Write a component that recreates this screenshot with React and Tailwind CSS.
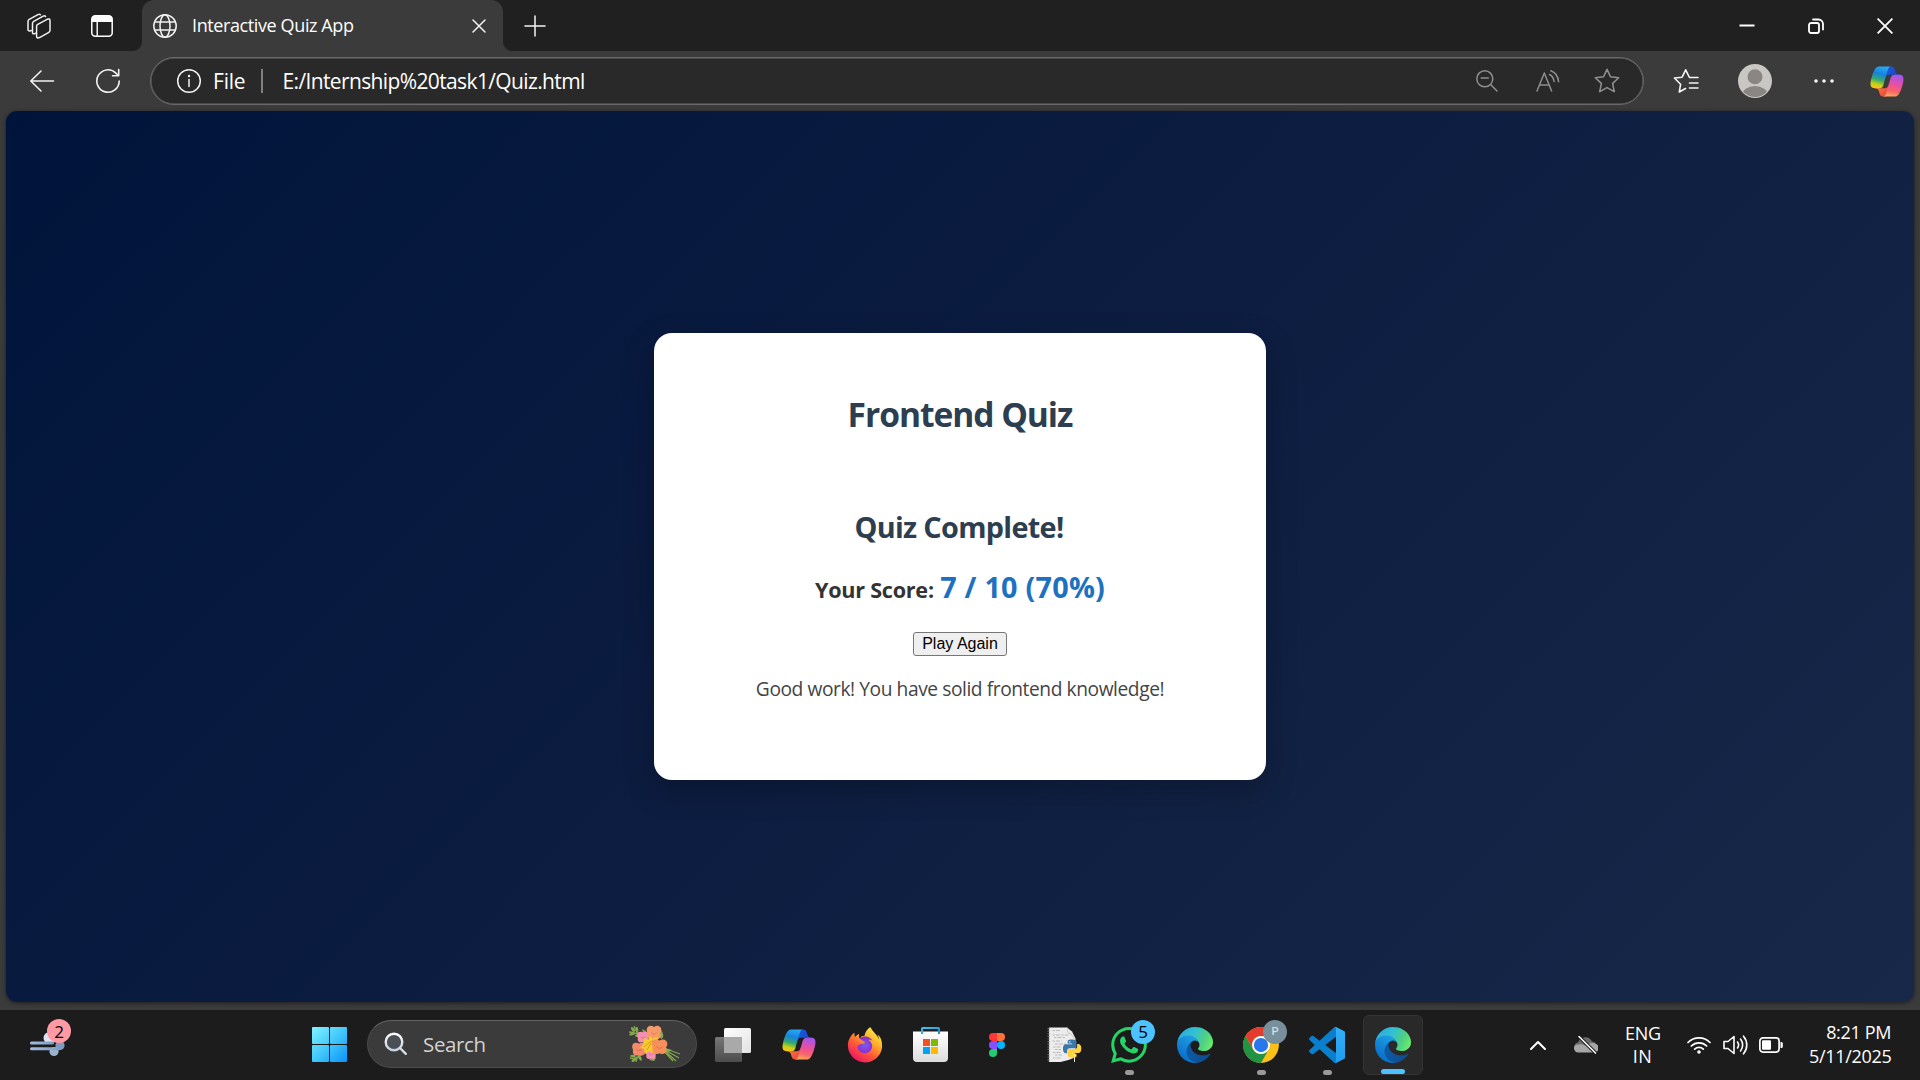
import React from "react";
import { SiWhatsapp } from "react-icons/si";
import { FaFirefoxBrowser } from "react-icons/fa";

/* ---------- shared gradients ---------- */

function Gradients() {
  return (
    <svg width="0" height="0" className="absolute" aria-hidden="true">
      <defs>
        <linearGradient id="cpBlue" x1="0.6" y1="0" x2="0.35" y2="1">
          <stop offset="0" stopColor="#2aa9f3" />
          <stop offset="0.35" stopColor="#1583dd" />
          <stop offset="0.62" stopColor="#35a872" />
          <stop offset="0.85" stopColor="#c9d312" />
          <stop offset="1" stopColor="#f6c21c" />
        </linearGradient>
        <linearGradient id="cpNavy" x1="0" y1="0" x2="1" y2="0.4">
          <stop offset="0" stopColor="#1b5bdb" />
          <stop offset="1" stopColor="#1a47cf" />
        </linearGradient>
        <linearGradient id="cpPink" x1="0.6" y1="0" x2="0.4" y2="1">
          <stop offset="0" stopColor="#a356ee" />
          <stop offset="0.45" stopColor="#ea4f9e" />
          <stop offset="0.75" stopColor="#f7646a" />
          <stop offset="1" stopColor="#fda75c" />
        </linearGradient>
        <linearGradient id="cpRed" x1="0" y1="0" x2="1" y2="1">
          <stop offset="0" stopColor="#fb8a3c" />
          <stop offset="1" stopColor="#e93b3f" />
        </linearGradient>
        <linearGradient id="egNavy" x1="0.2" y1="0.4" x2="1" y2="0.6">
          <stop offset="0" stopColor="#0c59a4" />
          <stop offset="1" stopColor="#114a8b" />
        </linearGradient>
        <linearGradient id="egBlue" x1="0.7" y1="0.2" x2="0.2" y2="1">
          <stop offset="0" stopColor="#1b9de2" />
          <stop offset="0.5" stopColor="#1480d4" />
          <stop offset="1" stopColor="#0067c0" />
        </linearGradient>
        <linearGradient id="egGreen" x1="0" y1="0.3" x2="1" y2="0.6">
          <stop offset="0" stopColor="#2ba9e2" />
          <stop offset="0.45" stopColor="#33c1d0" />
          <stop offset="0.75" stopColor="#4fcf84" />
          <stop offset="1" stopColor="#66eb6e" />
        </linearGradient>
        <linearGradient id="ffFlame" x1="0.85" y1="0.05" x2="0.25" y2="0.95">
          <stop offset="0" stopColor="#fff04a" />
          <stop offset="0.35" stopColor="#ffb02b" />
          <stop offset="0.65" stopColor="#ff5a36" />
          <stop offset="1" stopColor="#ef1765" />
        </linearGradient>
        <radialGradient id="ffGlobe">
          <stop offset="0" stopColor="#7a5cf0" />
          <stop offset="1" stopColor="#8a2bd0" />
        </radialGradient>
        <linearGradient id="winTile" gradientUnits="userSpaceOnUse" x1="0" y1="0" x2="35" y2="35">
          <stop offset="0" stopColor="#80f4ff" />
          <stop offset="0.5" stopColor="#43c8fb" />
          <stop offset="1" stopColor="#0a93f8" />
        </linearGradient>
        <linearGradient id="storeBag" x1="0" y1="0" x2="0" y2="1">
          <stop offset="0" stopColor="#ffffff" />
          <stop offset="1" stopColor="#dcdcdc" />
        </linearGradient>
        <linearGradient id="storeGrip" x1="0" y1="0" x2="1" y2="1">
          <stop offset="0" stopColor="#35c7f2" />
          <stop offset="1" stopColor="#1487cf" />
        </linearGradient>
        <linearGradient id="tvBack" x1="0" y1="0" x2="0" y2="1">
          <stop offset="0" stopColor="#777777" />
          <stop offset="1" stopColor="#4c4c4c" />
        </linearGradient>
        <linearGradient id="tvFront" x1="0" y1="0" x2="1" y2="1">
          <stop offset="0" stopColor="#ffffff" />
          <stop offset="1" stopColor="#e2e2e2" />
        </linearGradient>
        <linearGradient id="windBlue" x1="0" y1="0" x2="1" y2="0">
          <stop offset="0" stopColor="#a3bde0" />
          <stop offset="1" stopColor="#7f9dc4" />
        </linearGradient>
        <linearGradient id="vsSlab" x1="0" y1="0" x2="0" y2="1">
          <stop offset="0" stopColor="#34aef5" />
          <stop offset="1" stopColor="#1f9cf0" />
        </linearGradient>
        <linearGradient id="searchRing" x1="0" y1="0" x2="0" y2="1">
          <stop offset="0" stopColor="#ffffff" />
          <stop offset="1" stopColor="#c6cfdb" />
        </linearGradient>
      </defs>
    </svg>
  );
}

/* ---------- app logos ---------- */

function CopilotLogo({ className }) {
  return (
    <svg viewBox="0 2 48 44" className={className}>
      <path fill="url(#cpNavy)" d="M34.142 7.325A4.63 4.63 0 0 0 29.7 4h-1.35a4.63 4.63 0 0 0-4.554 3.794L21.48 20.407l.575-1.965a4.63 4.63 0 0 1 4.444-3.33h7.853l3.294 1.282 3.175-1.283h-.926a4.63 4.63 0 0 1-4.443-3.325l-1.31-4.461Z" />
      <path fill="url(#cpRed)" d="M14.33 40.656A4.63 4.63 0 0 0 18.779 44h2.87a4.63 4.63 0 0 0 4.629-4.51l.312-12.163-.654 2.233a4.63 4.63 0 0 1-4.443 3.329h-7.919l-2.823-1.532-3.057 1.532h.912a4.63 4.63 0 0 1 4.447 3.344l1.279 4.423Z" />
      <path fill="url(#cpBlue)" d="M29.5 4H13.46c-4.583 0-7.332 6.057-9.165 12.113-2.172 7.176-5.014 16.772 3.208 16.772h6.925a4.67 4.67 0 0 0 4.455-3.358 2078.617 2078.617 0 0 1 4.971-17.156c.842-2.853 1.544-5.303 2.621-6.83C27.079 4.643 28.086 4 29.5 4Z" />
      <path fill="url(#cpPink)" d="M18.498 44h16.04c4.582 0 7.332-6.058 9.165-12.115 2.171-7.177 5.013-16.775-3.208-16.775h-6.926a4.67 4.67 0 0 0-4.454 3.358 2084.036 2084.036 0 0 1-4.972 17.16c-.842 2.853-1.544 5.303-2.621 6.83-.604.855-1.61 1.542-3.024 1.542Z" />
    </svg>
  );
}

function EdgeLogo() {
  return (
    <svg viewBox="0 0 256 256" className="size-9">
      <g transform="translate(-4.63 -4.92)">
        <path fill="url(#egNavy)" d="M235.68,195.46a93.73,93.73,0,0,1-10.54,4.71,101.87,101.87,0,0,1-35.9,6.46c-47.32,0-88.54-32.55-88.54-74.32A31.48,31.48,0,0,1,117.13,105c-42.8,1.8-53.8,46.4-53.8,72.53,0,73.88,68.09,81.37,82.76,81.37,7.91,0,19.84-2.3,27-4.56l1.31-.44A128.34,128.34,0,0,0,241,201.1a4,4,0,0,0-5.32-5.64Z" />
        <path fill="url(#egBlue)" d="M110.34,246.34A79.2,79.2,0,0,1,87.6,225,80.72,80.72,0,0,1,117.13,105c3.12-1.47,8.45-4.13,15.54-4a32.35,32.35,0,0,1,25.69,13,31.88,31.88,0,0,1,6.36,18.66c0-.21,24.46-79.6-80-79.6-43.9,0-80,41.66-80,78.21a130.15,130.15,0,0,0,12.11,56,128,128,0,0,0,156.38,67.11,75.55,75.55,0,0,1-62.78-8Z" />
        <path fill="url(#egGreen)" d="M156.94,153.78c-.81,1.05-3.3,2.5-3.3,5.66,0,2.61,1.7,5.12,4.72,7.23,14.38,10,41.49,8.68,41.56,8.68a59.56,59.56,0,0,0,30.27-8.35A61.38,61.38,0,0,0,260.63,114c.26-22.41-8-37.31-11.34-43.91C228.09,28.76,182.35,5,132.62,5a128,128,0,0,0-128,126.2c.48-36.54,36.8-66.05,80-66.05,3.5,0,23.46.34,42,10.07,16.34,8.58,24.9,18.94,30.85,29.21,6.18,10.67,7.28,24.15,7.28,29.52S162,147.2,156.94,153.78Z" />
      </g>
    </svg>
  );
}

function WindowsLogo() {
  return (
    <svg viewBox="0 0 35 35" className="mr-[2px] size-[35px]">
      <g fill="url(#winTile)">
        <rect x="0" y="0" width="17" height="17" rx="1" />
        <rect x="18" y="0" width="17" height="17" rx="1" />
        <rect x="0" y="18" width="17" height="17" rx="1" />
        <rect x="18" y="18" width="17" height="17" rx="1" />
      </g>
    </svg>
  );
}

function TaskViewLogo() {
  return (
    <svg viewBox="0 0 36 34" className="h-[34px] w-9">
      <rect x="0" y="9" width="27" height="25" rx="1.5" fill="url(#tvBack)" />
      <rect x="9" y="0" width="27" height="25" rx="1.5" fill="url(#tvFront)" />
      <rect x="9" y="9" width="18" height="16" fill="#a9a9a9" />
    </svg>
  );
}

function FirefoxLogo() {
  return (
    <span className="relative flex">
      <svg viewBox="0 0 36 36" className="absolute inset-0 size-9">
        <circle cx="18" cy="18" r="9" fill="url(#ffGlobe)" />
      </svg>
      <FaFirefoxBrowser className="relative size-9" fill="url(#ffFlame)" />
    </span>
  );
}

function StoreLogo() {
  return (
    <svg viewBox="0 0 35 35" className="mr-px size-[35px]">
      <path d="M0 4.5h35V31a4 4 0 0 1-4 4H4a4 4 0 0 1-4-4Z" fill="url(#storeBag)" />
      <path d="M9 7V1.8q0-.8.8-.8h15.4q.8 0 .8.8V7" fill="none" stroke="url(#storeGrip)" strokeWidth="2" />
      <rect x="10" y="12" width="7" height="7" fill="#f25022" />
      <rect x="18" y="12" width="7" height="7" fill="#7fba00" />
      <rect x="10" y="20" width="7" height="7" fill="#00a4ef" />
      <rect x="18" y="20" width="7" height="7" fill="#ffb900" />
    </svg>
  );
}

function FigmaLogo() {
  return (
    <svg viewBox="0 0 16 24" className="h-6 w-4">
      <path d="M4 0h4v8H4a4 4 0 0 1 0-8Z" fill="#ff3737" />
      <path d="M8 0h4a4 4 0 0 1 0 8H8Z" fill="#ff7237" />
      <path d="M4 8h4v8H4a4 4 0 0 1 0-8Z" fill="#874fff" />
      <circle cx="12" cy="12" r="4" fill="#00b6ff" />
      <path d="M4 16h4v4a4 4 0 1 1-4-4Z" fill="#24cb71" />
    </svg>
  );
}

const PYTHON_HALF =
  "M14.25.18l.9.2.73.26.59.3.45.32.34.34.25.34.16.33.1.3.04.26.02.2-.01.13V8.5l-.05.63-.13.55-.21.46-.26.38-.3.31-.33.25-.35.19-.35.14-.33.1-.3.07-.26.04-.21.02H8.77l-.69.05-.59.14-.5.22-.41.27-.33.32-.27.35-.2.36-.15.37-.1.35-.07.32-.04.27-.02.21v3.06H3.17l-.21-.03-.28-.07-.32-.12-.35-.18-.36-.26-.36-.36-.35-.46-.32-.59-.28-.73-.21-.88-.14-1.05-.05-1.23.06-1.22.16-1.04.24-.87.32-.71.36-.57.4-.44.42-.33.42-.24.4-.16.36-.1.32-.05.24-.01h.16l.06.01h8.16v-.83H6.18l-.01-2.75-.02-.37.05-.34.11-.31.17-.28.25-.26.31-.23.38-.2.44-.18.51-.15.58-.12.64-.1.71-.06.77-.04.84-.02 1.27.05z";

function PythonFileLogo() {
  return (
    <svg viewBox="0 0 36 36" className="ml-[3px] size-9">
      <path d="M2 .5h18l5 4 3.500 7V24l-2 7-5 2-8 2H2Z" fill="#ececec" />
      <path d="M20 .5l1 5.500 3 1 3.500 5" fill="none" stroke="#c9c9c9" strokeWidth="1" />
      <path d="M1.500 1v34" stroke="#6a6a6a" strokeWidth="2" strokeDasharray="1.200 1.400" />
      <g stroke="#b4b4b4" strokeWidth="0.900" strokeDasharray="2.500 1 4 1.200">
        <path d="M5.500 3.500h8M5.500 8h16M7 10.500h11M5.500 14h9M8 17h11M6 20h8M8 22.500h6M6 25.500h8M8 28h7M6 31h8" />
      </g>
      <path d="M27.500 30v5" stroke="#e8e8e8" strokeWidth="1" />
      <g transform="translate(16 12.500) scale(0.760)">
        <path d={PYTHON_HALF} fill="#3b77a8" />
        <path d={PYTHON_HALF} fill="#ffd13e" transform="rotate(180 12 12)" />
        <circle cx="8.900" cy="3" r="1" fill="#e8eef4" />
        <circle cx="15.100" cy="21" r="1" fill="#ffffff" />
      </g>
    </svg>
  );
}

function ChromeLogo() {
  return (
    <svg viewBox="0 0 48 48" className="size-9">
      <circle cx="24" cy="24" r="23.900" fill="#fbc116" />
      <path d="M3.300 12A23.900 23.900 0 0 1 44.700 12H24A12 12 0 0 0 13.600 18L13.600 30Z" fill="#e33b2e" />
      <path d="M3.300 12A23.900 23.900 0 0 0 24 47.900L34.400 30A12 12 0 0 1 13.600 30Z" fill="#229342" />
      <circle cx="24" cy="24" r="12" fill="#fff" />
      <circle cx="24" cy="24" r="9.500" fill="#2878ec" />
    </svg>
  );
}

function VSCodeLogo() {
  return (
    <svg viewBox="0 0 100 100" className="size-9">
      <path fillRule="evenodd" fill="#0a7fcd" d="M70.912 99.317C72.487 99.931 74.283 99.891 75.873 99.126L96.461 89.22C98.624 88.179 100 85.989 100 83.587V16.413C100 14.011 98.624 11.822 96.461 10.781L75.873.874C73.786-.13 71.345.116 69.514 1.447 69.252 1.637 69.003 1.849 68.769 2.083L29.355 38.042 12.187 25.01C10.589 23.797 8.354 23.896 6.869 25.246L1.363 30.255C-.453 31.906-.455 34.763 1.359 36.417L16.247 50 1.359 63.583C-.455 65.237-.453 68.094 1.363 69.745L6.869 74.754C8.354 76.104 10.589 76.204 12.187 74.991L29.355 61.959 68.769 97.917C69.393 98.541 70.125 99.01 70.912 99.317ZM75.015 27.299 45.109 50 75.015 72.701V27.299Z" />
      <path fill="url(#vsSlab)" d="M75.015 4.500V95.500L70.900 99.300C72.500 99.930 74.300 99.890 75.900 99.130L96.460 89.220C98.620 88.180 100 85.990 100 83.590V16.410C100 14.010 98.620 11.820 96.460 10.780L75.870.870C73.790-.130 71.340.110 69.500 1.450 72.500-.200 75.015 1.800 75.015 4.500Z" />
    </svg>
  );
}

function WeatherWindLogo() {
  return (
    <svg viewBox="0 0 36 26" className="h-[26px] w-9">
      <circle cx="19.500" cy="7" r="6" fill="#dbe4f0" />
      <rect x="0" y="10.500" width="24" height="3" rx="1.500" fill="url(#windBlue)" />
      <circle cx="30" cy="14.500" r="4.600" fill="#7f9cbd" />
      <circle cx="24" cy="20.500" r="4.600" fill="#9cb3cf" />
      <rect x="0" y="16.300" width="31" height="3" rx="1.500" fill="url(#windBlue)" />
    </svg>
  );
}

function Bouquet() {
  const blossom = (cx, cy, r, fill, core) => (
    <g key={`${cx}-${cy}`}>
      <circle cx={cx} cy={cy} r={r * 0.8} fill={fill} />
      <circle cx={cx - r * 0.45} cy={cy - r * 0.35} r={r * 0.6} fill={fill} />
      <circle cx={cx + r * 0.45} cy={cy - r * 0.35} r={r * 0.6} fill={fill} />
      <circle cx={cx - r * 0.35} cy={cy + r * 0.4} r={r * 0.6} fill={fill} />
      <circle cx={cx + r * 0.35} cy={cy + r * 0.4} r={r * 0.6} fill={fill} />
      <path d={`M${cx - r * 0.4} ${cy}q${r * 0.4} ${r * 0.5} ${r * 0.8} 0`} fill="none" stroke={core} strokeWidth="0.8" />
    </g>
  );
  return (
    <svg viewBox="0 0 54 38" className="h-[38px] w-[54px]">
      <g stroke="#7fa64a" strokeWidth="1.300" fill="none">
        <path d="M38 24l14 5M37 25l14 8M36 25l12 11M36 26l9 10" />
        <path d="M1 7q8 0 16 7M6 1q2 6 6 10M2 33q8 2 16-8M8 37q1-6 6-10" />
      </g>
      <g fill="#86a94e">
        <ellipse cx="5" cy="4.500" rx="2.800" ry="1.400" transform="rotate(50 5 4.500)" />
        <ellipse cx="9" cy="4.500" rx="2.800" ry="1.300" transform="rotate(80 9 4.500)" />
        <ellipse cx="4" cy="9" rx="3" ry="1.300" transform="rotate(-15 4 9)" />
        <ellipse cx="10" cy="11" rx="3" ry="1.400" transform="rotate(10 10 11)" />
        <ellipse cx="5" cy="31" rx="2.800" ry="1.300" />
        <ellipse cx="6" cy="35" rx="2.800" ry="1.300" transform="rotate(-30 6 35)" />
        <ellipse cx="12" cy="33" rx="3" ry="1.400" transform="rotate(60 12 33)" />
        <path d="M14 4q7 2 7 10q-6-3-7-10ZM33 5q4 5 1 9l-5-3ZM21 35q3-3 7-2l-2 3ZM37 23l7 2-5 3Z" />
      </g>
      {blossom(15, 12, 5.5, "#f58fb0", "#d9668c")}
      {blossom(23, 29, 5, "#f58fb0", "#e0709a")}
      {blossom(26, 7.5, 7, "#f79a6b", "#e2703f")}
      {blossom(11, 24, 6.5, "#f58a6a", "#db6244")}
      <path d="M16 13l4 2 2-4 3 3 4-3 1 5 3 1-3 3 2 4-5 0-2 4-4-2-4 3-1-5-4-1 3-4Z" fill="#f7c930" />
      <path d="M16 22l6-5 5-2M19 25l4-7" stroke="#dc9d18" strokeWidth="1" fill="none" />
      {blossom(31.5, 21.5, 7.5, "#f78f5c", "#dd6535")}
    </svg>
  );
}

/* ---------- browser chrome ---------- */

function WorkspacesIcon() {
  return (
    <svg viewBox="0 0 26 26" className="size-[26px]" fill="none" stroke="#f2f2f2" strokeWidth="1.500" strokeLinejoin="round" strokeLinecap="round">
      <path d="M11 12.500q0-1.300 1.200-2l9.500-5.300q3-1.200 3 1.300v10q0 1.300-1.200 2l-9.500 5.300q-3 1.200-3-1.300Z" transform="translate(-.2 1.200) scale(.98)" />
      <path d="M9.500 20.200l-1.200.6q-1.800.4-1.800-1.400v-9q0-1.400 1.200-2.100l9.500-5.200q1.600-.7 2.300.4" />
      <path d="M5.300 17.500l-1 .4q-2.300.4-2.300-1.500V8.500q0-1.400 1.200-2.100L12 1.600q1.600-.7 2.400.2" />
    </svg>
  );
}

function TabActionsIcon() {
  return (
    <svg viewBox="0 0 22 22" className="size-[22px]">
      <rect x="0.800" y="0.800" width="20.400" height="20.400" rx="3.500" fill="none" stroke="#fff" strokeWidth="1.500" />
      <path d="M.8 7V4A3.200 3.200 0 0 1 4 .8h14A3.200 3.200 0 0 1 21.200 4v3Z" fill="#fff" />
      <path d="M6.200 7v14" stroke="#fff" strokeWidth="1.400" />
    </svg>
  );
}

function GlobeIcon() {
  return (
    <svg viewBox="0 0 24 24" className="size-6" fill="none" stroke="#f2f2f2" strokeWidth="1.500">
      <circle cx="12" cy="12" r="11.200" />
      <ellipse cx="12" cy="12" rx="5" ry="11.200" />
      <path d="M1.800 8h20.400M1.800 16h20.400" />
    </svg>
  );
}

function TabStrip() {
  return (
    <header className="flex h-[51px] shrink-0 bg-[#202020]">
      <div className="flex w-[142px] items-center pl-[26px]">
        <WorkspacesIcon />
        <span className="ml-[39px]"><TabActionsIcon /></span>
      </div>
      <div className="relative flex w-[361px] items-center rounded-t-[12px] bg-[#3b3b3b] pl-[11px]">
        <svg viewBox="0 0 9 9" className="absolute bottom-0 -left-[9px] size-[9px]"><path d="M9 0v9H0a9 9 0 0 0 9-9Z" fill="#3b3b3b" /></svg>
        <svg viewBox="0 0 9 9" className="absolute -right-[9px] bottom-0 size-[9px]"><path d="M0 0v9h9a9 9 0 0 1-9-9Z" fill="#3b3b3b" /></svg>
        <GlobeIcon />
        <span className="ml-[15px] w-[280px] text-[18px] tracking-[-0.39px] text-white">Interactive Quiz App</span>
        <svg viewBox="0 0 14 14" className="size-[14px] shrink-0" stroke="#f2f2f2" strokeWidth="1.500" strokeLinecap="round"><path d="M1 1l12 12M13 1L1 13" /></svg>
      </div>
      <div className="flex items-center pl-[21px]">
        <svg viewBox="0 0 22 22" className="size-[22px]" stroke="#f2f2f2" strokeWidth="1.500" strokeLinecap="round"><path d="M11 1v20M1 11h20" /></svg>
      </div>
      <div className="ml-auto flex items-center gap-[53px] pr-[27px]">
        <svg viewBox="0 0 16 16" className="size-4"><path d="M.5 7.500h15" stroke="#fff" strokeWidth="2" /></svg>
        <svg viewBox="0 0 16 16" className="size-4" fill="none" stroke="#fff" strokeWidth="1.800"><rect x="1" y="5" width="10" height="10" rx="2" /><path d="M5 1.500h5.500a4.500 4.500 0 0 1 4.500 4.500v5.500" strokeLinecap="round" /></svg>
        <svg viewBox="0 0 16 16" className="size-4" stroke="#fff" strokeWidth="1.800"><path d="M.6.600l14.800 14.800M15.400.600L.6 15.400" /></svg>
      </div>
    </header>
  );
}

function Toolbar() {
  return (
    <div className="flex h-[60px] shrink-0 items-center bg-[#3b3b3b]">
      <div className="flex w-[150px] items-center pl-[29px]">
        <svg viewBox="0 0 26 24" className="h-6 w-[26px]" fill="none" stroke="#f2f2f2" strokeWidth="1.600" strokeLinecap="round" strokeLinejoin="round"><path d="M24.500 12H2M12 2L1.800 12 12 22" /></svg>
        <svg viewBox="0 0 26 26" className="ml-10 size-[26px]" fill="none" stroke="#f2f2f2" strokeWidth="1.600" strokeLinecap="round" strokeLinejoin="round"><path d="M24.200 13a11.200 11.200 0 1 1-3.300-7.900l2.600 2.600M23.700 1.500v6.300h-6.200" /></svg>
      </div>
      <div className="flex h-12 w-[1494px] items-center rounded-full border border-[#696969] bg-[#292929] pl-[25px] shadow-[inset_0_0_0_0.500px_#696969]">
        <svg viewBox="0 0 26 26" className="size-[26px]" fill="none" stroke="#f2f2f2" strokeWidth="1.500"><circle cx="13" cy="13" r="11.300" /><path d="M13 11.500v7" strokeLinecap="round" /><circle cx="13" cy="8" r="1.200" fill="#f2f2f2" stroke="none" /></svg>
        <span className="ml-[11px] w-[48px] pt-[2px] text-[21px] tracking-[-0.2px] text-white">File</span>
        <span className="h-6 w-[1.500px] bg-[#808080]" />
        <span className="ml-5 pt-[2px] text-[21px] tracking-[-0.63px] whitespace-nowrap text-white">E:/Internship%20task1/Quiz.html</span>
        <div className="ml-auto flex items-center pr-[23px]">
          <svg viewBox="0 0 22 22" className="size-[22px]" fill="none" stroke="#8f8f8f" strokeWidth="1.500" strokeLinecap="round"><circle cx="8.800" cy="8.800" r="8" /><path d="M14.800 14.800L21 21M5.200 8h7.200" /></svg>
          <svg viewBox="0 0 24 22" className="ml-[38px] h-[22px] w-6" fill="none" stroke="#8f8f8f" strokeWidth="1.500" strokeLinecap="round" strokeLinejoin="round"><path d="M1 21L8.300 3 15.600 21M3.600 15h9.400" /><path d="M13.500 4.500q4 2 4.500 7M14.800.800q7 2.500 7.800 11" /></svg>
          <svg viewBox="0 0 24 24" className="ml-[34px] size-[26px]" fill="none" stroke="#8f8f8f" strokeWidth="1.450" strokeLinejoin="round"><path d="M12 1.200l3.200 6.900 7.600.9-5.600 5.200 1.500 7.600L12 18.100l-6.700 3.700 1.500-7.600L1.200 9l7.600-.9Z" /></svg>
        </div>
      </div>
      <div className="flex flex-1 items-center pl-[29px]">
        <svg viewBox="0 0 26 26" className="size-[26px] shrink-0" fill="none" stroke="#f5f5f5" strokeWidth="1.600" strokeLinejoin="round" strokeLinecap="round"><path d="M12.500 20.500L6.300 24l1.300-7.800L1.400 10l7.700-.8 3.600-7.400 3.500 7.200M16.500 9.500h8.500M16.500 15h8.500M16.500 20h8.500" /></svg>
        <svg viewBox="0 0 34 34" className="ml-[39px] size-[34px] shrink-0">
          <clipPath id="avatarClip"><circle cx="17" cy="17" r="16" /></clipPath>
          <circle cx="17" cy="17" r="17" fill="#c9c7c4" />
          <g clipPath="url(#avatarClip)" fill="#8a8683"><circle cx="17" cy="12.800" r="7.500" /><ellipse cx="17" cy="31.500" rx="13" ry="9.500" /></g>
        </svg>
        <svg viewBox="0 0 20 4" className="ml-[42px] h-1 w-5 shrink-0" fill="#f5f5f5"><circle cx="2" cy="2" r="1.800" /><circle cx="10" cy="2" r="1.800" /><circle cx="18" cy="2" r="1.800" /></svg>
        <CopilotLogo className="ml-[35px] h-[33px] w-[36px] shrink-0" />
      </div>
    </div>
  );
}

/* ---------- quiz page ---------- */

function QuizPage() {
  return (
    <div className="h-[899px] shrink-0 bg-[#3b3b3b] px-[6px] pb-2">
      <main className="flex h-[891px] items-start justify-center rounded-[11px] bg-[linear-gradient(135deg,#00143b,#0d1d41_50%,#182848)] pt-[222px] shadow-[0_1px_4px_rgba(0,0,0,0.5)]">
        <section className="flex h-[447px] w-[612px] flex-col items-center rounded-[18px] bg-white pt-[58px] shadow-[0_10px_30px_rgba(0,0,0,0.25)]">
          <h1 className="text-[33.6px] leading-[46px] font-bold tracking-[-1.05px] text-[#2c3e50]">Frontend Quiz</h1>
          <h2 className="mt-[70px] pr-[2px] text-[28.8px] leading-[40px] font-bold tracking-[-0.67px] text-[#2c3e50]">Quiz Complete!</h2>
          <p className="mt-5 h-10 text-[21.6px] leading-[40px] font-bold tracking-[-0.24px] text-[#333333]">
            Your Score: <span className="ml-[1px] text-[28.8px] tracking-[0.23px] text-[#1e70c1]">7 / 10 (70%)</span>
          </p>
          <button className="mt-[25px] h-6 w-[94px] rounded-[3px] border border-[#767676] bg-[#efefef] font-['Liberation_Sans',Arial,sans-serif] text-[16px] leading-[20px] text-black">Play Again</button>
          <p className="mt-[19px] text-[19.2px] leading-[28px] tracking-[-0.43px] text-[#444444]">Good work! You have solid frontend knowledge!</p>
        </section>
      </main>
    </div>
  );
}

/* ---------- taskbar ---------- */

function TaskItem({ children, running, active }) {
  return (
    <div className="flex h-[69px] w-[66px] shrink-0 items-center justify-center">
      <div className={active ? "relative flex size-[60px] items-center justify-center rounded-[6px] border border-[#343434] bg-[#292929]" : "relative flex size-[60px] items-center justify-center"}>
        {children}
        {running && <span className="absolute bottom-0 left-[25.500px] h-[5px] w-[9px] rounded-full bg-[#9a9a9a]" />}
        {active && <span className="absolute bottom-0 left-[17px] h-[5px] w-6 rounded-full bg-[#4cc2ff]" />}
      </div>
    </div>
  );
}

function Taskbar() {
  return (
    <footer className="flex h-[70px] shrink-0 bg-[#1c1c1c] text-white">
      <div className="flex h-[68px] w-[297px] items-center pl-[30px]">
        <div className="relative flex">
          <WeatherWindLogo />
          <span className="absolute -top-[12px] left-[17px] flex size-6 items-center justify-center rounded-full bg-[#ff99a4] text-[17px] leading-none text-black">2</span>
        </div>
      </div>
      <TaskItem><WindowsLogo /></TaskItem>
      <div className="mx-1 mt-[10px] ml-[4px] flex h-12 w-[330px] items-center rounded-full border border-[#4a4a4a] border-t-[#626262] bg-[#3b3b3b] pr-[14px] pl-4">
        <svg viewBox="0 0 24 24" className="size-6" fill="none" stroke="url(#searchRing)" strokeWidth="2.400" strokeLinecap="round"><circle cx="10" cy="10" r="8.300" fill="#4b4f55" /><path d="M16 16l5.800 5.800" stroke="#d6dde6" /></svg>
        <span className="ml-[15px] text-[20.500px] tracking-[-0.35px] text-[#d2d2d2]">Search</span>
        <span className="ml-auto"><Bouquet /></span>
      </div>
      <div className="-ml-[1px] flex">
        <TaskItem><TaskViewLogo /></TaskItem>
        <TaskItem><CopilotLogo className="mr-px h-[33px] w-[36px]" /></TaskItem>
        <TaskItem><FirefoxLogo /></TaskItem>
        <TaskItem><StoreLogo /></TaskItem>
        <TaskItem><FigmaLogo /></TaskItem>
        <TaskItem><PythonFileLogo /></TaskItem>
        <TaskItem running>
          <SiWhatsapp className="size-9 text-[#25d366]" />
          <span className="absolute top-[5px] right-[4px] flex size-6 items-center justify-center rounded-full bg-[#4cc2ff] text-[17px] leading-none text-black">5</span>
        </TaskItem>
        <TaskItem><EdgeLogo /></TaskItem>
        <TaskItem running>
          <ChromeLogo />
          <span className="absolute top-[5px] right-[4px] flex size-6 items-center justify-center rounded-full bg-[#78909c] font-['Roboto',sans-serif] text-[11px] leading-none font-medium text-[#d5dde1]">P</span>
        </TaskItem>
        <TaskItem running><VSCodeLogo /></TaskItem>
        <TaskItem active><EdgeLogo /></TaskItem>
      </div>
      <div className="ml-auto flex h-[69px] items-center pr-[29px]">
        <svg viewBox="0 0 16 10" className="h-[10px] w-4" fill="none" stroke="#fff" strokeWidth="2" strokeLinecap="round" strokeLinejoin="round"><path d="M1 9l7-7 7 7" /></svg>
        <svg viewBox="0 0 24 18" className="ml-7 h-[18px] w-6">
          <path d="M5 16a5 5 0 0 1-.8-9.800A7.500 7.500 0 0 1 18 5.500 5.300 5.300 0 0 1 18.500 16Z" fill="#6b6b6b" />
          <path d="M4 16.500a4.300 4.300 0 0 1-2.500-7.600Q9 7 12 10q4-5 11-1.500a4.500 4.500 0 0 1-3.500 8Z" fill="#a6a6a6" />
          <path d="M4.500 0L22 17.500" stroke="#1c1c1c" strokeWidth="3.500" />
          <path d="M4.500 0L22 17.500" stroke="#fff" strokeWidth="1.500" />
        </svg>
        <div className="mr-px ml-[27px] w-[35px] text-center text-[18px] leading-[23px]">
          <div className="tracking-[-0.3px]">ENG</div>
          <div className="tracking-[0.5px]">IN</div>
        </div>
        <svg viewBox="0 0 24 18" className="ml-[26px] h-[18px] w-6" fill="none" stroke="#fff" strokeWidth="1.700" strokeLinecap="round"><path d="M1 6.500a15.600 15.600 0 0 1 22 0M4.300 10a11 11 0 0 1 15.400 0M7.700 13.200a6.200 6.200 0 0 1 8.600 0" /><circle cx="12" cy="16" r="1.800" fill="#fff" stroke="none" /></svg>
        <svg viewBox="0 0 26 20" className="ml-3 h-5 w-[26px]" fill="none" stroke="#fff" strokeWidth="1.600" strokeLinecap="round" strokeLinejoin="round"><path d="M1 6.500h4l6-5v17l-6-5H1Z" /><path d="M14.500 7a5 5 0 0 1 0 6M17.500 4a9.500 9.500 0 0 1 0 12M20.500 1.200a13.500 13.500 0 0 1 0 17.600" /></svg>
        <svg viewBox="0 0 24 16" className="ml-[10px] h-4 w-6"><rect x="0.900" y="0.900" width="19.200" height="14.200" rx="3" fill="none" stroke="#fff" strokeWidth="1.700" /><rect x="3" y="3.200" width="9" height="9.600" rx="1" fill="#fff" /><path d="M21.500 5h.8q1.500 0 1.500 1.500v3q0 1.500-1.500 1.500h-.8Z" fill="#fff" /></svg>
        <div className="ml-[26px] w-[82px] pb-[2px] text-right text-[18px] leading-[24px] whitespace-nowrap">
          <div className="tracking-[-0.35px]">8:21 PM</div>
          <div className="tracking-[-0.3px]">5/11/2025</div>
        </div>
      </div>
    </footer>
  );
}

export default function App() {
  return (
    <div className="flex h-[1080px] w-[1920px] flex-col overflow-hidden bg-[#3b3b3b] font-['Open_Sans','Noto_Sans',sans-serif]">
      <Gradients />
      <TabStrip />
      <Toolbar />
      <QuizPage />
      <Taskbar />
    </div>
  );
}
